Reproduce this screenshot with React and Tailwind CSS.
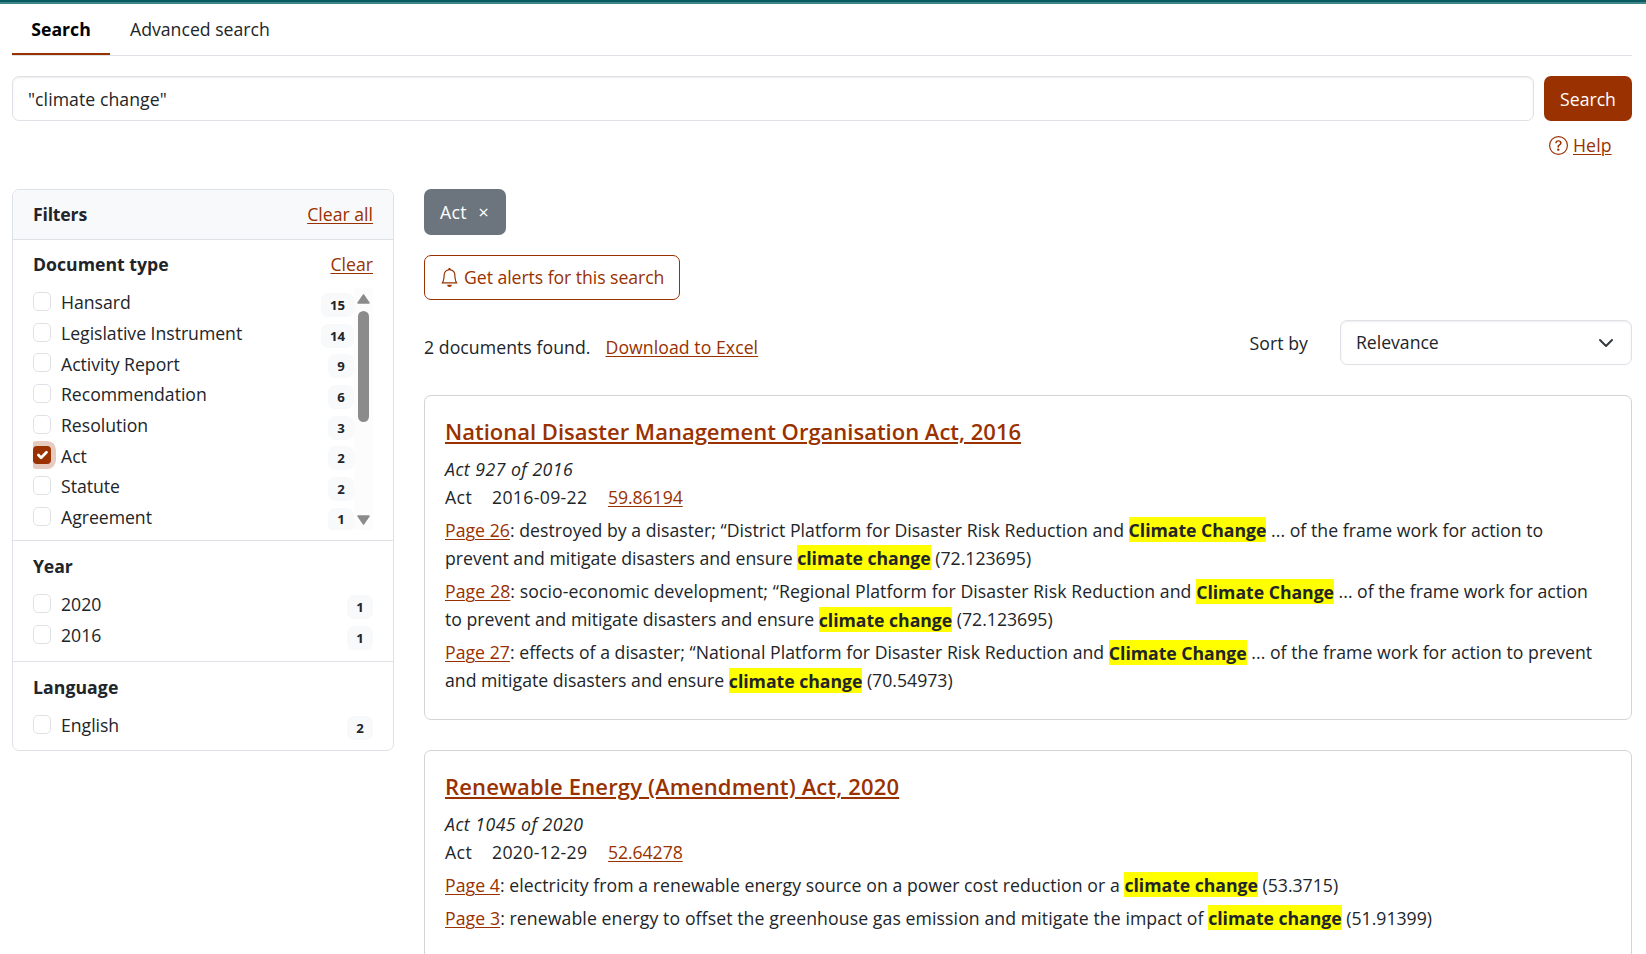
import { BsBell, BsQuestionCircle } from "react-icons/bs";

const link = "text-[#993100] underline decoration-1 underline-offset-[2px]";

const documentTypes = [
  { label: "Hansard", count: 15 },
  { label: "Legislative Instrument", count: 14 },
  { label: "Activity Report", count: 9 },
  { label: "Recommendation", count: 6 },
  { label: "Resolution", count: 3 },
  { label: "Act", count: 2, checked: true },
  { label: "Statute", count: 2 },
  { label: "Agreement", count: 1 },
];

function Checkbox({ checked }) {
  if (checked) {
    return (
      <span className="mt-px flex size-[18px] shrink-0 items-center justify-center rounded-[4px] bg-[#993100] shadow-[0_0_0_5px_#e6cbc0]">
        <svg viewBox="0 0 20 20" className="size-[18px]" fill="none" stroke="#fff" strokeWidth="3" strokeLinecap="round" strokeLinejoin="round">
          <path d="m6 10 3 3 6-6" />
        </svg>
      </span>
    );
  }
  return <span className="block h-[19px] w-[18px] shrink-0 rounded-[5px] border border-[#dee2e6] bg-white" />;
}

function Option({ label, count, checked }) {
  return (
    <div className="flex h-[30.67px] items-start">
      <div className="pt-[4px]">
        <Checkbox checked={checked} />
      </div>
      <span className="ml-[10px] pt-[0.3px] tracking-[-0.03px]">{label}</span>
      <span className="mt-[5px] ml-auto flex h-[24px] min-w-[26px] items-center justify-center rounded-[7px] bg-[#f8f9fa] px-[9px] pt-px text-[13.2px] leading-none font-bold">
        {count}
      </span>
    </div>
  );
}

function Mark({ children }) {
  return <b className="bg-[#ffff00] py-[0.5px] font-bold tracking-[-0.03px]">{children}</b>;
}

function Result({ title, titleClass, number, date, score, children }) {
  return (
    <article className="h-[325px] shrink-0 rounded-[7px] border border-[#d2d4d5] px-5 pt-[20.5px]">
      <h2 className="h-[28px] text-[22px] leading-[28px] font-semibold text-[#993100]">
        <a className={`underline decoration-2 underline-offset-[2px] ${titleClass}`}>{title}</a>
      </h2>
      <div className="mt-[10px] tracking-[0.48px] italic">{number}</div>
      <div className="flex">
        <span className="w-[47px] tracking-[0.4px]">Act</span>
        <span className="w-[116px] tracking-[0.33px]">{date}</span>
        <a className={`tracking-[-0.08px] ${link}`}>{score}</a>
      </div>
      <div className="mt-[5px] flex flex-col gap-[5px] whitespace-nowrap">{children}</div>
    </article>
  );
}

export default function App() {
  return (
    <div className="h-[954px] w-[1646px] overflow-hidden bg-white font-['Open_Sans',sans-serif] text-[17.67px] leading-[28.125px] text-[#212529]">
      <div className="h-[4px] border-b-2 border-[#3f8589] bg-[#075b61]" />
      <div className="pr-[14px] pl-[12px]">
        <nav className="flex h-[52px] border-b border-[#dee2e6]">
          <a className="flex h-[51px] w-[98px] justify-center border-b-2 border-[#993100] pt-[11px] font-bold text-black">Search</a>
          <a className="ml-5 pt-[11px]">Advanced search</a>
        </nav>
        <div className="mt-5 flex h-[45px] gap-[10px]">
          <div className="flex-1 rounded-[7px] border border-[#dee2e6] pt-[8px] pl-[15px] tracking-[0.06px] shadow-[inset_0_1px_2px_rgba(0,0,0,0.075)]">"climate change"</div>
          <button className="w-[88px] rounded-[7px] bg-[#993100] pt-[2px] text-white">Search</button>
        </div>
        <div className="mt-[10px] flex h-[28px] items-center justify-end pr-[20px] text-[#993100]">
          <BsQuestionCircle className="mr-[5px] size-[19px]" />
          <a className={`w-[39px] tracking-[0.1px] ${link}`}>Help</a>
        </div>
        <div className="mt-[30px] flex items-start gap-[30px]">
          <aside className="h-[562px] w-[382px] shrink-0 rounded-[7px] border border-[#dee2e6]">
            <div className="flex h-[50px] items-center justify-between rounded-t-[6px] border-b border-[#dee2e6] bg-[#f8f9fa] px-5">
              <b className="tracking-[-0.2px]">Filters</b>
              <a className={link}>Clear all</a>
            </div>
            <section className="h-[301px] border-b border-[#dee2e6] px-5 pt-[10px]">
              <div className="flex h-[28px] justify-between">
                <b>Document type</b>
                <a className={link}>Clear</a>
              </div>
              <div className="mt-[10px] flex h-[242px] overflow-hidden">
                <div className="min-w-0 flex-1">
                  {documentTypes.map((t) => (
                    <Option key={t.label} {...t} />
                  ))}
                </div>
                <div className="flex w-[19px] flex-col items-center bg-[#fcfcfc] pt-[6px]">
                  <svg width="13" height="10" viewBox="0 0 13 10" fill="#8b8b8b" stroke="#8b8b8b" strokeWidth="1.5" strokeLinejoin="round">
                    <path d="M6.5 1 12 9H1z" />
                  </svg>
                  <div className="mt-[7px] h-[111px] w-[11px] rounded-full bg-[#8b8b8b]" />
                  <svg className="mt-[93px]" width="13" height="10" viewBox="0 0 13 10" fill="#8b8b8b" stroke="#8b8b8b" strokeWidth="1.5" strokeLinejoin="round">
                    <path d="M6.5 9 12 1H1z" />
                  </svg>
                </div>
              </div>
            </section>
            <section className="h-[121px] border-b border-[#dee2e6] px-5 pt-[11px]">
              <b className="block h-[28px] tracking-[-0.15px]">Year</b>
              <div className="mt-[10px]">
                <Option label="2020" count={1} />
                <Option label="2016" count={1} />
              </div>
            </section>
            <section className="px-5 pt-[11px]">
              <b className="block h-[28px] tracking-[0.06px]">Language</b>
              <div className="mt-[10px]">
                <Option label="English" count={2} />
              </div>
            </section>
          </aside>
          <main className="min-w-0 flex-1">
            <div className="flex h-[46px] w-[82px] items-start rounded-[7px] bg-[#6c757d] pt-[9px] pl-4 tracking-[0.3px] text-white">
              Act
              <span className="ml-[11.5px] text-[18.5px]">×</span>
            </div>
            <button className="mt-5 flex h-[45px] w-[256px] items-center rounded-[7px] border border-[#993100] pl-[15px] text-[#993100]">
              <BsBell className="mr-[5px] size-[19px]" />
              <span className="tracking-[-0.06px] whitespace-nowrap">Get alerts for this search</span>
            </button>
            <div className="mt-5 flex h-[45px] items-start tracking-[0.06px]">
              <span className="mt-[13px]">2 documents found.</span>
              <a className={`mt-[13px] ml-[15px] ${link}`}>Download to Excel</a>
              <span className="mt-[8.5px] mr-8 ml-auto">Sort by</span>
              <div className="flex h-[45px] w-[292px] items-center justify-between rounded-[7px] border border-[#dee2e6] pr-[17px] pl-[15px] shadow-[inset_0_1px_2px_rgba(0,0,0,0.075)]">
                <span className="tracking-[-0.03px]">Relevance</span>
                <svg className="size-[16px]" viewBox="0 0 16 16" fill="none" stroke="#343a40" strokeWidth="2" strokeLinecap="round" strokeLinejoin="round">
                  <path d="m2 5 6 6 6-6" />
                </svg>
              </div>
            </div>
            <div className="mt-[30px] flex flex-col gap-[30px]">
              <Result
                title="National Disaster Management Organisation Act, 2016"
                titleClass="tracking-normal"
                number="Act 927 of 2016"
                date="2016-09-22"
                score="59.86194"
              >
                <div>
                  <span className="tracking-[0.028px]">
                    <a className={link}>Page 26</a>: destroyed by a disaster; “District Platform for Disaster Risk Reduction and{" "}
                  </span>
                  <Mark>Climate Change</Mark>
                  <span className="tracking-[0.04px]"> ... of the frame work for action to</span>
                  <br />
                  prevent and mitigate disasters and ensure <Mark>climate change</Mark> (72.123695)
                </div>
                <div>
                  <span className="tracking-[0.09px]">
                    <a className={link}>Page 28</a>: socio-economic development; “Regional Platform for Disaster Risk Reduction and{" "}
                  </span>
                  <Mark>Climate Change</Mark> ... of the frame work for action
                  <br />
                  to prevent and mitigate disasters and ensure <Mark>climate change</Mark> (72.123695)
                </div>
                <div>
                  <span className="tracking-[0.03px]">
                    <a className={link}>Page 27</a>: effects of a disaster; “National Platform for Disaster Risk Reduction and{" "}
                  </span>
                  <Mark>Climate Change</Mark>
                  <span className="tracking-[0.04px]"> ... of the frame work for action to prevent</span>
                  <br />
                  and mitigate disasters and ensure <Mark>climate change</Mark> (70.54973)
                </div>
              </Result>
              <Result
                title="Renewable Energy (Amendment) Act, 2020"
                titleClass="tracking-[0.15px]"
                number="Act 1045 of 2020"
                date="2020-12-29"
                score="52.64278"
              >
                <div>
                  <span className="tracking-[0.056px]">
                    <a className={link}>Page 4</a>: electricity from a renewable energy source on a power cost reduction or a{" "}
                  </span>
                  <Mark>climate change</Mark> (53.3715)
                </div>
                <div>
                  <span className="tracking-[0.09px]">
                    <a className={link}>Page 3</a>: renewable energy to offset the greenhouse gas emission and mitigate the impact of{" "}
                  </span>
                  <Mark>climate change</Mark> (51.91399)
                </div>
              </Result>
            </div>
          </main>
        </div>
      </div>
    </div>
  );
}
